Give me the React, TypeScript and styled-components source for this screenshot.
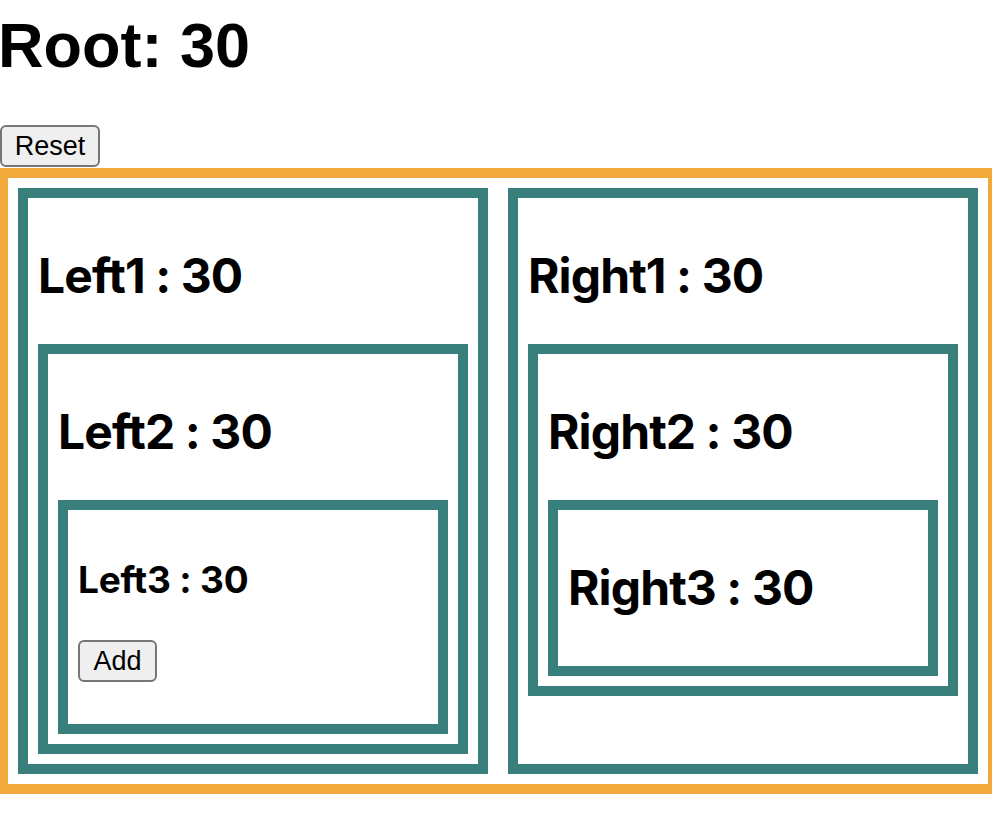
import React, { useState } from "react";
import styled, { createGlobalStyle } from "styled-components";

const GlobalStyle = createGlobalStyle`
  html, body {
    margin: 0;
    padding: 0;
    background: #ffffff;
    overflow-x: hidden;
  }
  body {
    font-family: "Liberation Sans", Arial, sans-serif;
    color: #000000;
  }
`;

const RootTitle = styled.h1`
  margin: 8px 0 43px -2px;
  font-family: "Liberation Sans", Arial, sans-serif;
  font-size: 63px;
  line-height: 74px;
  font-weight: 700;
`;

const Button = styled.button<{ $wide?: boolean }>`
  display: block;
  box-sizing: border-box;
  width: ${({ $wide }) => ($wide ? "100px" : "79px")};
  height: 42px;
  padding: 0;
  border: 2px solid #767676;
  border-radius: 6px;
  background: #efefef;
  color: #000000;
  font-family: "Liberation Sans", Arial, sans-serif;
  font-size: 27px;
  cursor: pointer;
`;

const AddRow = styled.div`
  margin-bottom: 32px;
`;

const Frame = styled.div`
  box-sizing: border-box;
  display: flex;
  gap: 20px;
  width: 1000px;
  margin: 1px 0 0 -2px;
  padding: 10px;
  border: 10px solid #f1a93c;
`;

const Panel = styled.div<{ $top?: boolean }>`
  box-sizing: border-box;
  ${({ $top }) => ($top ? "flex: 1 1 0; min-width: 0;" : "")}
  padding: 10px;
  border: 10px solid #387e7b;
`;

const Title = styled.h2<{ $small?: boolean }>`
  font-family: Inter, "Liberation Sans", sans-serif;
  font-weight: 700;
  font-size: ${({ $small }) => ($small ? "37px" : "48px")};
  line-height: ${({ $small }) => ($small ? "45px" : "56px")};
  margin: ${({ $small }) => ($small ? "37px 0 38px" : "40px 0")};
  letter-spacing: ${({ $small }) => ($small ? "-0.2px" : "-0.9px")};
`;

export default function App() {
  const [count, setCount] = useState(30);

  return (
    <>
      <GlobalStyle />
      <RootTitle>Root: {count}</RootTitle>
      <Button $wide onClick={() => setCount(30)}>
        Reset
      </Button>
      <Frame>
        <Panel $top>
          <Title>Left1 : {count}</Title>
          <Panel>
            <Title>Left2 : {count}</Title>
            <Panel>
              <Title $small>Left3 : {count}</Title>
              <AddRow>
                <Button onClick={() => setCount((c) => c + 1)}>Add</Button>
              </AddRow>
            </Panel>
          </Panel>
        </Panel>
        <Panel $top>
          <Title>Right1 : {count}</Title>
          <Panel>
            <Title>Right2 : {count}</Title>
            <Panel>
              <Title>Right3 : {count}</Title>
            </Panel>
          </Panel>
        </Panel>
      </Frame>
    </>
  );
}
